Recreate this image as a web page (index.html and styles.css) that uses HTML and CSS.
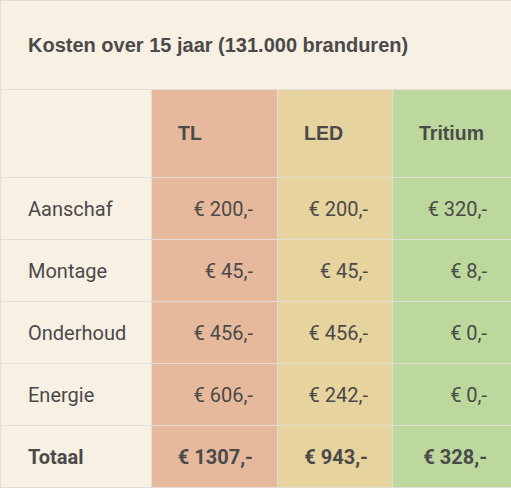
FILE: index.html
```html
<!DOCTYPE html>
<html>
<head>
<meta charset="utf-8">
<link rel="stylesheet" href="styles.css">
</head>
<body>
<table class="costs">
  <colgroup>
    <col class="c-label">
    <col class="c-tl">
    <col class="c-led">
    <col class="c-tri">
  </colgroup>
  <thead>
    <tr class="title-row"><th colspan="4" class="title">Kosten over 15 jaar (131.000 branduren)</th></tr>
    <tr class="head-row">
      <th class="label"></th>
      <th class="tl">TL</th>
      <th class="led">LED</th>
      <th class="tri">Tritium</th>
    </tr>
  </thead>
  <tbody>
    <tr><td class="label">Aanschaf</td><td class="tl num">€ 200,-</td><td class="led num">€ 200,-</td><td class="tri num">€ 320,-</td></tr>
    <tr><td class="label">Montage</td><td class="tl num">€ 45,-</td><td class="led num">€ 45,-</td><td class="tri num">€ 8,-</td></tr>
    <tr><td class="label">Onderhoud</td><td class="tl num">€ 456,-</td><td class="led num">€ 456,-</td><td class="tri num">€ 0,-</td></tr>
    <tr><td class="label">Energie</td><td class="tl num">€ 606,-</td><td class="led num">€ 242,-</td><td class="tri num">€ 0,-</td></tr>
    <tr class="total"><td class="label">Totaal</td><td class="tl num">€ 1307,-</td><td class="led num">€ 943,-</td><td class="tri num">€ 328,-</td></tr>
  </tbody>
</table>
</body>
</html>
```

FILE: styles.css
```css
html, body {
  margin: 0;
  padding: 0;
  background: #ffffff;
}

.costs {
  border-collapse: collapse;
  width: 511px;
  table-layout: fixed;
  font-family: Roboto, "Liberation Sans", sans-serif;
  color: #4a4a4a;
}

.c-label { width: 151px; }
.c-tl { width: 126px; }
.c-led { width: 115px; }
.c-tri { width: 119px; }

.costs th,
.costs td {
  border: 1px solid #e2ddd6;
  padding: 0;
}

.title {
  background: #f9f0e4;
  height: 88px;
  text-align: left;
  padding-left: 27px !important;
  font-family: "Liberation Sans", Arial, sans-serif;
  font-weight: bold;
  font-size: 20px;
}

.head-row th {
  height: 87px;
  text-align: left;
  padding-left: 26px;
  font-family: "Liberation Sans", Arial, sans-serif;
  font-weight: bold;
  font-size: 19.5px;
}

.costs tbody td {
  height: 61px;
  font-size: 20px;
}

.label {
  background: #f9f0e4;
  padding-left: 27px !important;
  text-align: left;
}

.tl { background: #e6b99c; }
.led { background: #e6d39e; }
.tri { background: #bcd89c; }

.num {
  text-align: right;
  padding-right: 24px !important;
}

.total td {
  font-weight: bold;
}
```
